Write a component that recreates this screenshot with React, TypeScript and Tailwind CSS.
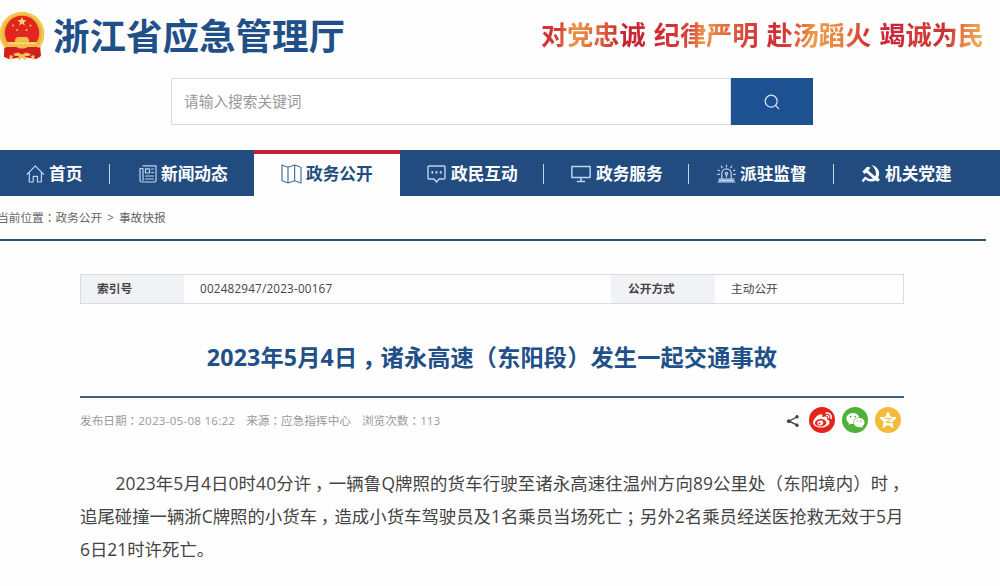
import React from "react";
import { FaWeibo, FaWeixin } from "react-icons/fa";

function Emblem() {
  return (
    <svg className="h-[50px] w-[46px] shrink-0" viewBox="0 0 46 50">
      <path d="M5 34 L4 45 L10 48 L23 46 L36 48 L41 45 L40 34 Z" fill="#d3201f" />
      <circle cx="22" cy="23" r="22.3" fill="#edb63c" />
      <circle cx="22" cy="23" r="21" fill="none" stroke="#f6cf5e" strokeWidth="1.5" />
      <circle cx="22" cy="22" r="17.3" fill="#e2261f" />
      <path d="M4.5 37 Q12 33 22 38 Q32 33 39.5 37 L40 46 L35 48 L31 44 Q22 47 13 44 L9 48 L4 46 Z" fill="#d3201f" />
      <path d="M22 6l1.2 3.1 3.3.2-2.6 2.1.9 3.2-2.8-1.8-2.8 1.8.9-3.2-2.6-2.1 3.3-.2z" fill="#f8d76a" />
      <g fill="#f3bd4c">
        <circle cx="13" cy="14.5" r="1.1" />
        <circle cx="30.5" cy="14.5" r="1.1" />
        <circle cx="17" cy="19" r="1.1" />
        <circle cx="26.5" cy="19" r="1.1" />
        <path d="M15 28.5 L17 26 H27 L29 28.5 V31 H37 V36 H28 Q22 39 16 36 H7 V31 H15 Z" />
      </g>
      <path d="M8 31.5 H36 V33 H8Z" fill="#f9da72" />
      <path d="M13 43 l5-1.5 4 2 4-2 5 1.5 -2 2 h-4 l1.5 3.5 h-3 l-1.5-2.5 -1.5 2.5 h-3 l1.5-3.5 h-4z" fill="#f2c050" />
      <path d="M10 44 l3 1 -1 3 -3 1z M34 44 l-3 1 1 3 3 1z" fill="#f6cf5e" />
    </svg>
  );
}

const line = {
  fill: "none",
  stroke: "currentColor",
  strokeWidth: 1.2,
  strokeLinejoin: "round" as const,
  strokeLinecap: "round" as const,
};

const HomeIcon = () => (
  <svg className="h-5 w-[19px]" viewBox="0 0 19 20" {...line}>
    <path d="M1 10.3 L9.3 1.8 L17.7 10.3 M3.3 8.4 V18 H7.2 V12.3 H11.5 V18 H15.4 V8.4" />
  </svg>
);
const NewsIcon = () => (
  <svg className="h-5 w-[18px]" viewBox="0 0 18 20" {...line}>
    <path d="M4 1.8 H17 V16 a2 2 0 0 1 -2 2 H2.8 a1.8 1.8 0 0 1 -1.8 -1.8 V4.5 H4 V16.3 M6.5 4.8 h4 v4.2 h-4z M12.5 5 h2 M12.5 8.5 h2 M6.5 12 h8 M6.5 15 h8" />
  </svg>
);
const MapIcon = () => (
  <svg className="h-5 w-[21px]" viewBox="0 0 21 20" {...line}>
    <path d="M1 1 L7 3.2 L13.6 1 L20 3.2 V19 L13.6 16.8 L7 19 L1 16.8 Z M7 3.2 V19 M13.6 1 V16.8" />
  </svg>
);
const ChatIcon = () => (
  <svg className="h-5 w-[19px]" viewBox="0 0 19 20" {...line}>
    <path d="M2.2 2 H16.8 Q18 2 18 3.2 V13.8 Q18 15 16.8 15 H12 L9.5 18 L7 15 H2.2 Q1 15 1 13.8 V3.2 Q1 2 2.2 2Z" strokeWidth="1.4" />
    <path d="M5.3 8 v.8 M9.5 8 v.8 M13.7 8 v.8" strokeWidth="2" />
  </svg>
);
const MonitorIcon = () => (
  <svg className="h-5 w-5" viewBox="0 0 20 20" {...line}>
    <path d="M.9 2.5 H19.1 V13.5 H.9 Z M10 13.5 V17.5 M6.5 17.5 H13.5" strokeWidth="1.5" />
  </svg>
);
const AlarmIcon = () => (
  <svg className="h-5 w-[19px]" viewBox="0 0 19 20" {...line}>
    <path d="M4.8 15 V9.5 a4.7 4.7 0 0 1 9.4 0 V15 M2 15.2 H17 M1 18 H18 M2.2 16.6 H16.8 M9.5 1 V2.8 M4.2 2.2 l1 1.5 M14.8 2.2 l-1 1.5 M1 6 l1.6 .7 M18 6 l-1.6 .7 M.7 10.3 h1.8 M16.5 10.3 h1.8" />
    <circle cx="9.5" cy="9.6" r="1.2" />
    <path d="M9.5 10.8 V13" />
  </svg>
);
const PartyIcon = () => (
  <svg className="h-5 w-[20px]" viewBox="0 0 20 20" fill="currentColor">
    <path d="M10.3 1 C16.5 2 20.2 8.3 17 13.6 L19 15.7 L16.8 17.7 L15 16 C11.3 18.5 7 17.8 4.6 15.3 L2.6 18.2 L.6 16.5 L4.3 12.6 C7 15.5 10.2 15.6 12.6 14 C16.5 11 15.3 4.8 10.3 1 Z" />
    <path d="M1.3 7.8 L6.2 2.7 L9.6 3.6 L7.3 6.4 L17.3 15.2 L15.3 17.2 L5.2 8.5 L3.8 10 Z" />
  </svg>
);

const Comma = () => <span className="-mr-[0.22em] pl-[0.22em]">，</span>;
const Colon = () => <span className="font-['Noto_Sans_CJK_TC',sans-serif]">：</span>;
const Semicolon = () => <span className="-mr-[0.2em] pl-[0.2em]">；</span>;

type NavItem = { label: string; icon: React.ReactNode; cell: string; gap: string; divider?: boolean; active?: boolean };

const nav: NavItem[] = [
  { label: "首页", icon: <HomeIcon />, cell: "w-[110px] pl-[26px]", gap: "gap-1", divider: true },
  { label: "新闻动态", icon: <NewsIcon />, cell: "w-[144px] pl-[29px]", gap: "gap-1" },
  { label: "政务公开", icon: <MapIcon />, cell: "w-[146px] pl-[27px]", gap: "gap-1", active: true },
  { label: "政民互动", icon: <ChatIcon />, cell: "w-[144px] pl-[27px]", gap: "gap-[5px]", divider: true },
  { label: "政务服务", icon: <MonitorIcon />, cell: "w-[145px] pl-[27px]", gap: "gap-[5px]", divider: true },
  { label: "派驻监督", icon: <AlarmIcon />, cell: "w-[145px] pl-[28px]", gap: "gap-1", divider: true },
  { label: "机关党建", icon: <PartyIcon />, cell: "w-[146px] pl-[27px]", gap: "gap-1" },
];

function NavCell({ item }: { item: NavItem }) {
  const tone = item.active ? "bg-[#fefefe] border-t-4 border-[#c51f3b] text-[#234d82] pb-[3px]" : "text-white pt-px";
  return (
    <div className={`flex h-full shrink-0 items-center justify-between ${item.cell} ${tone}`}>
      <div className={`flex items-center ${item.gap}`}>
        <span className={item.active ? "text-[#47749c]" : item.label === "机关党建" ? "text-white" : "text-[#bfd4ee]"}>{item.icon}</span>
        <span className="text-[16.7px] leading-5 font-bold whitespace-nowrap">{item.label}</span>
      </div>
      {item.divider && <span className="h-5 w-px bg-[#c5d5e8]" />}
    </div>
  );
}

function ShareIcon() {
  return (
    <svg className="mt-[2px] mr-[9px] h-[14px] w-[14px]" viewBox="0 0 14 14" fill="#454545" stroke="#454545">
      <path d="M11 3 L3 7.2 L11 11" fill="none" strokeWidth="1.4" />
      <circle cx="11" cy="2.8" r="1.3" />
      <circle cx="2.8" cy="7.2" r="1.5" />
      <circle cx="11" cy="11.2" r="1.3" />
    </svg>
  );
}

export default function App() {
  return (
    <div className="h-[586px] w-[1000px] overflow-hidden bg-[#fefefe] font-['Open_Sans','Noto_Sans_CJK_SC',sans-serif] text-[#444]">
      <header className="flex h-[78px] items-start justify-between pr-[16px]">
        <div className="flex items-start gap-[7px] pt-[11px]">
          <Emblem />
          <h1 className="text-[36.5px] leading-[50px] font-bold whitespace-nowrap text-[#215089]">浙江省应急管理厅</h1>
        </div>
        <div className="flex gap-[8px] bg-[linear-gradient(100deg,#cf2c36_0%,#d53a36_5%,#eb9548_8.5%,#e0653b_14%,#c92231_20%,#d0303a_29%,#d7453a_34%,#ea984c_37.5%,#e5683d_42%,#ce2934_51%,#d63b35_56%,#ee9c48_61.5%,#e67f40_68%,#cf2b34_74%,#c9243a_80%,#d53b39_84%,#ca3033_91%,#e98545_95%,#f3b55f_100%)] bg-clip-text pt-[16px] text-[26.2px] leading-[38px] font-bold whitespace-nowrap text-transparent">
          <span>对党忠诚</span>
          <span>纪律严明</span>
          <span>赴汤蹈火</span>
          <span>竭诚为民</span>
        </div>
      </header>

      <form className="ml-[171px] flex h-[47px] w-[642px]">
        <input
          className="min-w-0 flex-1 border border-[#dadada] bg-white px-3 text-[14.7px] outline-none placeholder:text-[#999]"
          placeholder="请输入搜索关键词"
        />
        <button type="button" className="flex w-[82px] items-center justify-center bg-[#1d5191]">
          <svg className="h-4 w-4" viewBox="0 0 16 16" fill="none" stroke="#dbe8f7" strokeWidth="1.2" strokeLinecap="round">
            <circle cx="7.2" cy="7.2" r="6" />
            <path d="M11.7 11.7 L14.7 14.7" />
          </svg>
        </button>
      </form>

      <nav className="mt-[25px] flex h-[46px] bg-[#224c80]">
        {nav.map((item) => (
          <NavCell key={item.label} item={item} />
        ))}
      </nav>

      <div className="mr-[14px] h-[45px] border-b-2 border-[#2d4f73]">
        <p className="ml-[-3px] pt-[11px] text-[11.7px] leading-5 whitespace-nowrap text-[#666]">
          当前位置<Colon />政务公开<span className="mx-[5px]">&gt;</span>事故快报
        </p>
      </div>

      <main className="ml-[80px] w-[824px] pt-[33px]">
        <div className="flex h-[30px] items-stretch border border-[#dcdcdc] text-[11.7px] leading-[26px] whitespace-nowrap">
          <span className="w-[103px] bg-[#f1f2f6] pl-4 font-bold">索引号</span>
          <span className="w-[427px] pl-4 tracking-[0.2px]">002482947/2023-00167</span>
          <span className="w-[104px] bg-[#f1f2f6] pl-[17px] font-bold">公开方式</span>
          <span className="pl-4">主动公开</span>
        </div>

        <h2 className="flex h-[94px] items-center justify-center border-b-2 border-[#3b6080] pt-[14px] text-[23.2px] font-bold tracking-[0.14px] whitespace-nowrap text-[#215089]">
          <span>2023年5月4日<Comma />诸永高速（东阳段）发生一起交通事故</span>
        </h2>

        <div className="flex h-[44px] items-center justify-between pr-[3px]">
          <p className="flex gap-[11px] text-[11.65px] whitespace-nowrap text-[#999]">
            <span>发布日期<Colon /><span className="tracking-[0.22px]">2023-05-08 16:22</span></span>
            <span>来源<Colon />应急指挥中心</span>
            <span>浏览次数<Colon />113</span>
          </p>
          <div className="flex items-center gap-[7px]">
            <div className="flex items-center">
              <ShareIcon />
              <span className="flex size-[26px] items-center justify-center rounded-full bg-[#e6231b] text-white">
                <FaWeibo size={19} />
              </span>
            </div>
            <span className="flex size-[26px] items-center justify-center rounded-full bg-[#50b13a] text-white">
              <FaWeixin size={19} />
            </span>
            <span className="flex size-[26px] items-center justify-center rounded-full bg-[#f2bc3a]">
              <svg className="size-[18px]" viewBox="0 0 18 18">
                <path d="M9 1 L11.4 6.2 L17 6.8 L12.8 10.7 L14 16.5 L9 13.6 L4 16.5 L5.2 10.7 L1 6.8 L6.6 6.2 Z" fill="#fff" stroke="#fff" strokeLinejoin="round" />
                <path d="M5.8 7.5 Q9 6.8 12 7.7 L7.5 11.2 Q10 12 13.5 11.2" fill="none" stroke="#f2bc3a" strokeWidth="1.1" />
              </svg>
            </span>
          </div>
        </div>

        <article className="mt-[25px] text-[17.4px] leading-[33.2px] whitespace-nowrap">
          <p className="pl-[35.5px] tracking-[0.13px]">
            2023年5月4日0时40分许<Comma />一辆鲁Q牌照的货车行驶至诸永高速往温州方向89公里处（东阳境内）时<Comma />
          </p>
          <p>
            追尾碰撞一辆浙C牌照的小货车<Comma />造成小货车驾驶员及1名乘员当场死亡<Semicolon />另外2名乘员经送医抢救无效于5月
          </p>
          <p>6日21时许死亡。</p>
        </article>
      </main>
    </div>
  );
}
